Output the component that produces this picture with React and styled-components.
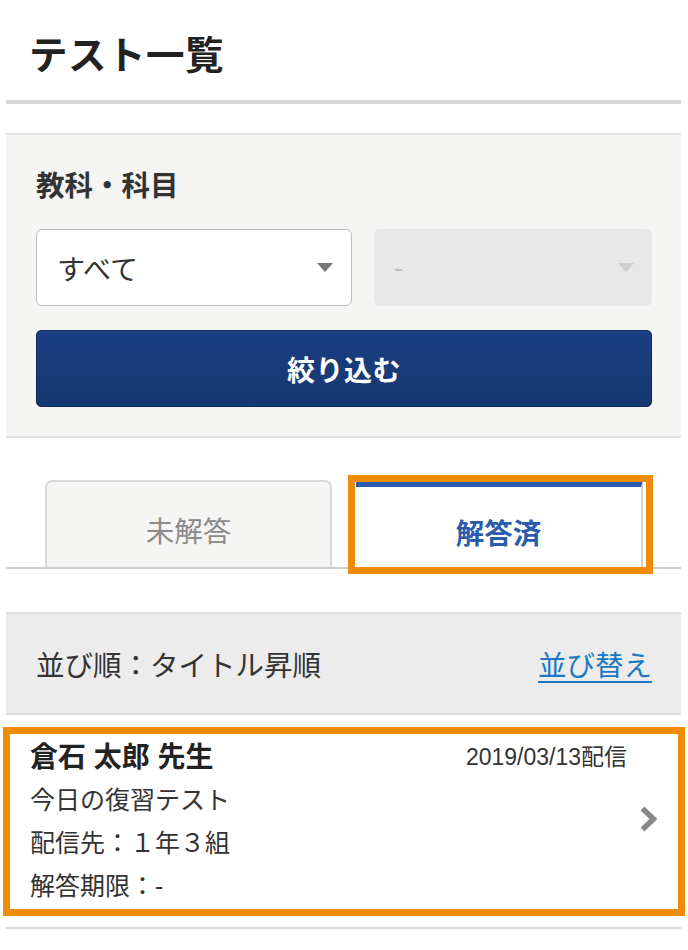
import React from "react";
import styled, { createGlobalStyle } from "styled-components";

const GlobalStyle = createGlobalStyle`
  body {
    margin: 0;
    background: #fff;
    font-family: "Liberation Sans", "Noto Sans CJK JP", sans-serif;
    color: #333;
  }
`;

const Page = styled.div`
  width: 688px;
  padding: 0 7px 20px 6px;
  box-sizing: border-box;
`;

const Header = styled.header`
  height: 104px;
  display: flex;
  align-items: center;
  padding: 0 0 0 23px;
  border-bottom: 4px solid #d8d8d8;
  box-sizing: border-box;
  h1 {
    margin: 4px 0 0;
    font-size: 38.5px;
    font-weight: 700;
    color: #222;
    letter-spacing: 0.5px;
  }
`;

const FilterPanel = styled.section`
  margin-top: 29px;
  background: #f5f6f4;
  border-top: 2px solid #e2e2e2;
  border-bottom: 2px solid #e2e2e2;
  padding: 36px 29px 29px 30px;
  display: flex;
  flex-direction: column;
`;

const Label = styled.div`
  font-size: 28.5px;
  font-weight: 700;
  line-height: 30px;
  color: #333;
`;

const SelectRow = styled.div`
  margin-top: 28px;
  display: grid;
  grid-template-columns: 316px 1fr;
  gap: 22px;
`;

const Select = styled.div`
  height: 77px;
  box-sizing: border-box;
  border-radius: 6px;
  display: flex;
  align-items: center;
  justify-content: space-between;
  padding: 0 18px 0 20px;
  font-size: 28px;
  background: ${(p) => (p.$disabled ? "#e8e8e8" : "#fff")};
  border: ${(p) => (p.$disabled ? "none" : "1.5px solid #bdbdbd")};
  color: ${(p) => (p.$disabled ? "#bbb" : "#333")};
`;

const Caret = styled.span`
  width: 0;
  height: 0;
  border-left: 8px solid transparent;
  border-right: 8px solid transparent;
  border-top: 9px solid ${(p) => (p.$disabled ? "#cfcfcf" : "#777")};
`;

const SubmitButton = styled.button`
  margin-top: 24px;
  height: 77px;
  border-radius: 5px;
  border: 1px solid #10285a;
  background: linear-gradient(#1a3f82, #163871);
  color: #fff;
  font-family: inherit;
  font-size: 28px;
  font-weight: 700;
  letter-spacing: 0.5px;
`;

const Tabs = styled.div`
  margin-top: 42px;
  display: grid;
  grid-template-columns: 287px 287px;
  gap: 24px;
  padding: 0 0 0 39px;
  border-bottom: 2px solid #cfcfcf;
`;

const Tab = styled.div`
  position: relative;
  height: 87px;
  box-sizing: border-box;
  display: flex;
  align-items: center;
  justify-content: center;
  font-size: 28.5px;
  ${(p) =>
    p.$active
      ? `
    background: #fff;
    border-top: 7px solid #2a5cab;
    border-right: 2px solid #d4d4d4;
    color: #2a5cab;
    font-weight: 700;
    padding-top: 8px;
  `
      : `
    background: #f5f6f4;
    border: 2px solid #d8d8d8;
    border-bottom: none;
    border-radius: 7px 7px 0 0;
    color: #8a8a8a;
    padding-top: 10px;
  `}
`;

const Highlight = styled.div`
  position: absolute;
  top: ${(p) => p.$top}px;
  right: ${(p) => p.$right}px;
  bottom: ${(p) => p.$bottom}px;
  left: ${(p) => p.$left}px;
  border: 7px solid #ef8b07;
  pointer-events: none;
`;

const SortBar = styled.div`
  margin-top: 43px;
  height: 103px;
  box-sizing: border-box;
  background: #ececec;
  border-top: 2px solid #dcdcdc;
  border-bottom: 2px solid #dcdcdc;
  display: flex;
  align-items: center;
  justify-content: space-between;
  padding: 0 29px 0 30px;
  font-size: 28.5px;
  color: #333;
  a {
    color: #1b78c2;
    text-decoration: underline;
    text-underline-offset: 5px;
  }
`;

const Card = styled.div`
  position: relative;
  display: flex;
  align-items: center;
  gap: 13px;
  padding: 18px 24px 22px 24px;
  border-bottom: 2px solid #d8d8d8;
`;

const CardBody = styled.div`
  flex: 1;
  display: flex;
  flex-direction: column;
`;

const CardRow = styled.div`
  height: 43px;
  display: flex;
  align-items: center;
  justify-content: space-between;
  font-size: 25px;
  color: #333;
`;

const Teacher = styled.span`
  font-size: 28px;
  font-weight: 700;
  color: #222;
`;

const DateText = styled.span`
  font-size: 23px;
  color: #333;
`;

function Chevron() {
  return (
    <svg width="17" height="26" viewBox="0 0 17 26">
      <polyline
        points="2.5,2.5 13.5,13 2.5,23.5"
        fill="none"
        stroke="#888"
        strokeWidth="5.5"
      />
    </svg>
  );
}

export default function App() {
  return (
    <Page>
      <GlobalStyle />
      <Header>
        <h1>テスト一覧</h1>
      </Header>

      <FilterPanel>
        <Label>教科・科目</Label>
        <SelectRow>
          <Select>
            すべて
            <Caret />
          </Select>
          <Select $disabled>
            -
            <Caret $disabled />
          </Select>
        </SelectRow>
        <SubmitButton>絞り込む</SubmitButton>
      </FilterPanel>

      <Tabs>
        <Tab>未解答</Tab>
        <Tab $active>
          解答済
          <Highlight $top={-12} $right={-12} $bottom={-7} $left={-8} />
        </Tab>
      </Tabs>

      <SortBar>
        <span>並び順：タイトル昇順</span>
        <a>並び替え</a>
      </SortBar>

      <Card>
        <CardBody>
          <CardRow>
            <Teacher>倉石 太郎 先生</Teacher>
            <DateText>2019/03/13配信</DateText>
          </CardRow>
          <CardRow>今日の復習テスト</CardRow>
          <CardRow>配信先：１年３組</CardRow>
          <CardRow>解答期限：-</CardRow>
        </CardBody>
        <Chevron />
        <Highlight $top={12} $right={-4} $bottom={11} $left={-3} />
      </Card>
    </Page>
  );
}
